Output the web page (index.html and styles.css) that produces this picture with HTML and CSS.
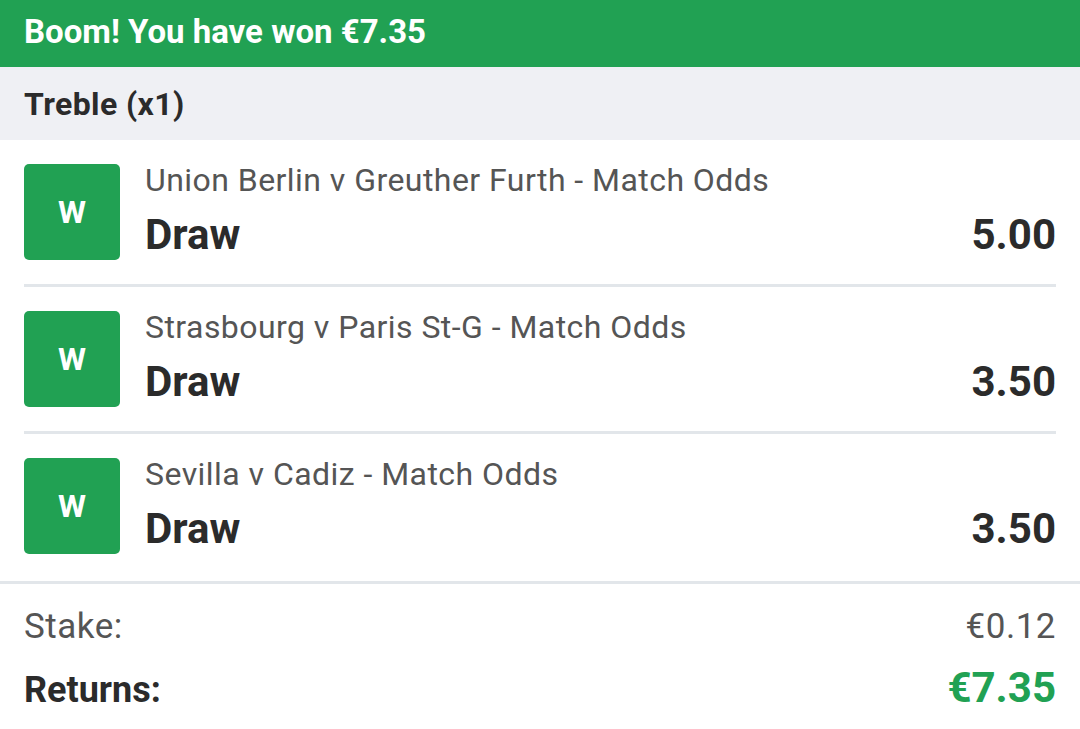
FILE: index.html
```html
<!DOCTYPE html>
<html>
<head>
<meta charset="utf-8">
<link rel="stylesheet" href="styles.css">
</head>
<body>
<div class="slip">
  <div class="banner">Boom! You have won €7.35</div>
  <div class="bet-type">Treble (x1)</div>
  <div class="legs">
    <div class="leg">
      <div class="badge">W</div>
      <div class="leg-info">
        <div class="event">Union Berlin v Greuther Furth - Match Odds</div>
        <div class="sel-row"><span class="sel">Draw</span><span class="odds">5.00</span></div>
      </div>
    </div>
    <div class="leg">
      <div class="badge">W</div>
      <div class="leg-info">
        <div class="event">Strasbourg v Paris St-G - Match Odds</div>
        <div class="sel-row"><span class="sel">Draw</span><span class="odds">3.50</span></div>
      </div>
    </div>
    <div class="leg last">
      <div class="badge">W</div>
      <div class="leg-info">
        <div class="event">Sevilla v Cadiz - Match Odds</div>
        <div class="sel-row"><span class="sel">Draw</span><span class="odds">3.50</span></div>
      </div>
    </div>
  </div>
  <div class="summary">
    <div class="sum-row stake"><span>Stake:</span><span>€0.12</span></div>
    <div class="sum-row returns"><span>Returns:</span><span class="ret-val">€7.35</span></div>
  </div>
</div>
</body>
</html>
```
FILE: styles.css
```css
* { box-sizing: border-box; }
html, body { margin: 0; padding: 0; background: #fff; }
body { font-family: Roboto, "Liberation Sans", sans-serif; color: #2b2b2b; width: 1080px; height: 729px; overflow: hidden; }
.slip { display: flex; flex-direction: column; }
.banner {
  height: 67px;
  background: #21a153;
  color: #fff;
  font-weight: 700;
  font-size: 33px;
  padding: 0 24px 4px;
  display: flex;
  align-items: center;
}
.bet-type {
  height: 73px;
  background: #eff0f4;
  font-weight: 700;
  font-size: 32px;
  letter-spacing: 0.4px;
  padding: 0 24px;
  display: flex;
  align-items: center;
}
.legs { display: flex; flex-direction: column; }
.leg {
  display: flex;
  gap: 25px;
  margin: 0 24px;
  padding: 24px 0;
  border-bottom: 3px solid #e2e6ea;
}
.leg.last { margin: 0; padding: 24px 24px 27px; }
.badge {
  width: 96px;
  height: 96px;
  flex: none;
  background: #21a153;
  border-radius: 5px;
  color: #fff;
  font-weight: 700;
  font-size: 32px;
  display: flex;
  align-items: center;
  justify-content: center;
}
.leg-info { flex: 1; display: flex; flex-direction: column; }
.event { font-size: 32px; letter-spacing: 0.45px; color: #555; line-height: 32px; }
.sel-row { display: flex; justify-content: space-between; align-items: baseline; margin-top: 16px; }
.sel, .odds { font-size: 42px; font-weight: 700; line-height: 46px; color: #2b2b2b; }
.summary { padding: 24px 24px 0; display: flex; flex-direction: column; gap: 20px; }
.sum-row { display: flex; justify-content: space-between; align-items: baseline; }
.stake { font-size: 35px; letter-spacing: 0.5px; color: #555; line-height: 38px; }
.returns { font-size: 36px; font-weight: 700; line-height: 44px; }
.ret-val { color: #21a153; font-size: 42px; }
```
